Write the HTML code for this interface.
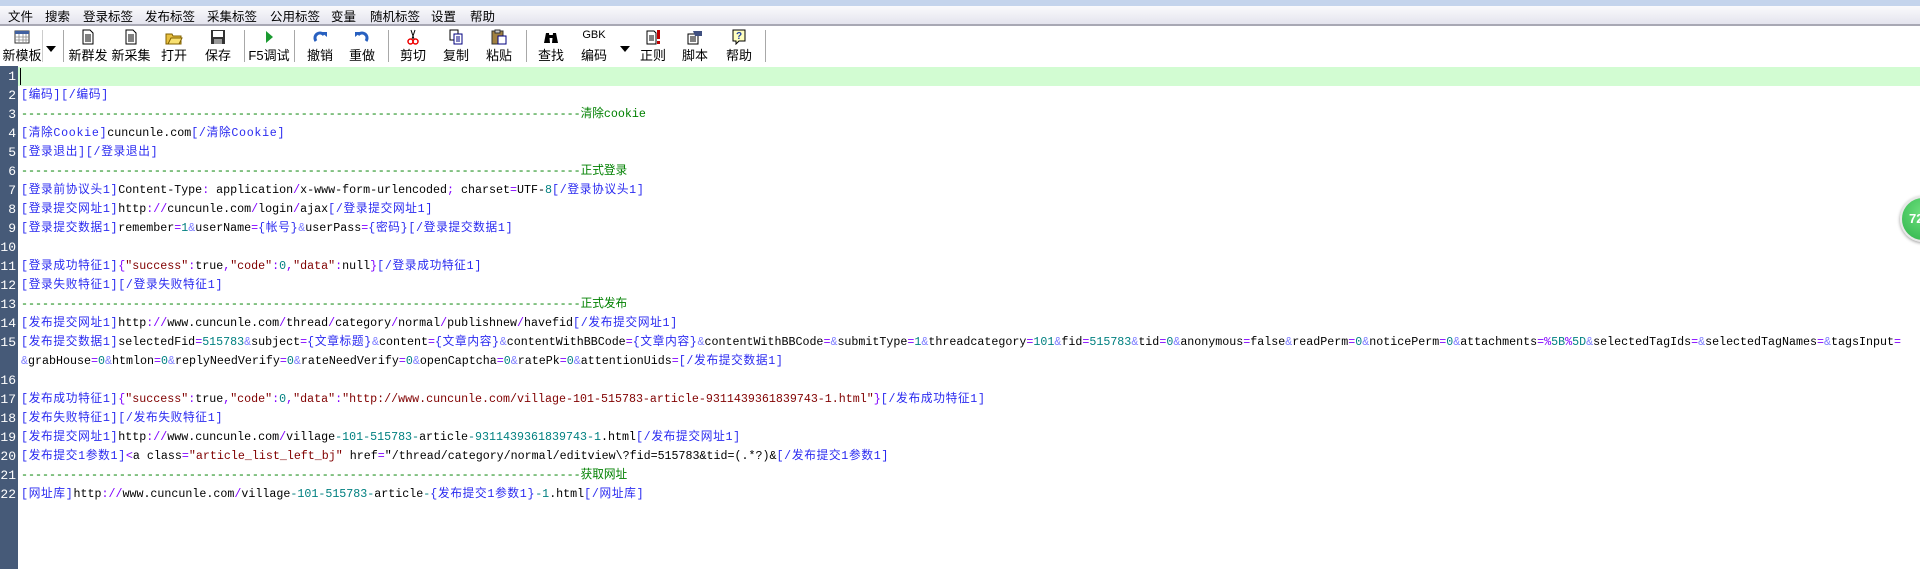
<!DOCTYPE html>
<html><head><meta charset="utf-8"><style>
*{margin:0;padding:0;box-sizing:border-box}
body{width:1920px;height:569px;overflow:hidden;background:#fff;font-family:"Liberation Sans","Noto Sans CJK SC",sans-serif;position:relative}
#title{position:absolute;left:0;top:0;width:1920px;height:6px;background:#c4d4ec}
#menu{position:absolute;left:0;top:6px;width:1920px;height:20px;background:linear-gradient(#fafafc,#e4e4ee);border-bottom:2px solid #a8a8b4;font-size:12.5px;color:#000}
#menu span{position:absolute;top:0px}
#tb{position:absolute;left:0;top:26px;width:1920px;height:40px;background:#fff}
.bt{position:absolute;top:0;width:44px;text-align:center;font-size:13px}
.bt svg{display:block;margin:3px auto 0;width:18px;height:16px}
.bt .l{display:block;margin-top:0px;white-space:nowrap}
.sep{position:absolute;top:4px;width:1px;height:32px;background:#a8a8a8}
.arr{position:absolute;top:20px;width:0;height:0;border-left:5px solid transparent;border-right:5px solid transparent;border-top:6px solid #000}
#ed{position:absolute;left:0;top:66px;width:1920px;height:503px;background:#fff}
#gut{position:absolute;left:0;top:0;width:18px;height:503px;background:#465a78}
#band{position:absolute;left:18px;top:1px;width:1902px;height:19px;background:#d2fcd2}
#cur{position:absolute;left:20px;top:2px;width:1px;height:17px;background:#000}
.ln{position:absolute;left:0;width:16px;text-align:right;color:#fff;font:13px "Liberation Mono",monospace;line-height:19px}
.tx{position:absolute;left:21px;white-space:pre;font:11.67px "Liberation Mono","Noto Sans CJK SC",monospace;line-height:19px;color:#000}
.t{color:#2a2af0;letter-spacing:0.7px}
.o{color:#8000ff}.a{color:#8080ff}.n{color:#008080}.s{color:#800000}.g{color:#008000}
#ball{position:absolute;left:1900px;top:196px;width:46px;height:46px;border-radius:50%;background:radial-gradient(circle at 50% 35%,#6ee07e,#2db34a);border:2px solid #e8e8e8;box-shadow:0 1px 3px #999;color:#fff;font:bold 13px "Liberation Sans",sans-serif;padding:13px 0 0 7px}
</style></head><body>
<div id="title"></div>
<div id="menu">
<span style="left:8px">文件</span><span style="left:45px">搜索</span><span style="left:83px">登录标签</span><span style="left:145px">发布标签</span><span style="left:207px">采集标签</span><span style="left:270px">公用标签</span><span style="left:331px">变量</span><span style="left:370px">随机标签</span><span style="left:431px">设置</span><span style="left:470px">帮助</span>
</div>
<div id="tb">
<div class="bt" style="left:0px"><svg viewBox="0 0 18 16"><rect x="2" y="2" width="14" height="12" fill="#fff" stroke="#333"/><rect x="2" y="2" width="14" height="3" fill="#4060a0"/><path d="M2 8h14M2 11h14M6 5v9M10 5v9M13 5v9" stroke="#888" stroke-width=".8"/></svg><span class="l">新模板</span></div>
<div class="sep" style="left:42px;background:#ccc"></div>
<div class="arr" style="left:46px"></div>
<div class="sep" style="left:63px"></div>
<div class="bt" style="left:66px"><svg viewBox="0 0 18 16"><path d="M4 1h7l3 3v11H4z" fill="#fff" stroke="#000"/><path d="M6 6h6M6 8h6M6 10h6M6 12h6" stroke="#000"/></svg><span class="l">新群发</span></div>
<div class="bt" style="left:109px"><svg viewBox="0 0 18 16"><path d="M4 1h7l3 3v11H4z" fill="#fff" stroke="#000"/><path d="M6 6h6M6 8h6M6 10h6M6 12h6" stroke="#000"/></svg><span class="l">新采集</span></div>
<div class="bt" style="left:152px"><svg viewBox="0 0 18 16"><path d="M1 5h6l1 2h8v8H1z" fill="#e8c040" stroke="#806000"/><path d="M3 15l3-6h11l-3 6z" fill="#f8e070" stroke="#806000"/></svg><span class="l">打开</span></div>
<div class="bt" style="left:196px"><svg viewBox="0 0 18 16"><rect x="2" y="1" width="14" height="14" fill="#333"/><rect x="4" y="2" width="10" height="6" fill="#fff"/><rect x="5" y="10" width="8" height="5" fill="#999"/></svg><span class="l">保存</span></div>
<div class="sep" style="left:244px"></div>
<div class="bt" style="left:247px"><svg viewBox="0 0 18 16"><path d="M6 2l7 6-7 6z" fill="#1a9a30"/></svg><span class="l">F5调试</span></div>
<div class="sep" style="left:294px"></div>
<div class="bt" style="left:298px"><svg viewBox="0 0 18 16"><path d="M5 12a5 5 0 1 1 8-6" fill="none" stroke="#2860c0" stroke-width="3"/><path d="M10 3h6v5z" fill="#2860c0"/></svg><span class="l">撤销</span></div>
<div class="bt" style="left:340px"><svg viewBox="0 0 18 16"><path d="M13 12a5 5 0 1 0-8-6" fill="none" stroke="#2860c0" stroke-width="3"/><path d="M8 3H2v5z" fill="#2860c0"/></svg><span class="l">重做</span></div>
<div class="sep" style="left:388px"></div>
<div class="bt" style="left:391px"><svg viewBox="0 0 18 16"><path d="M7 1l3 9M11 1l-3 9" stroke="#000"/><circle cx="6.5" cy="12.5" r="2.5" fill="none" stroke="#e00" stroke-width="1.5"/><circle cx="11.5" cy="12.5" r="2.5" fill="none" stroke="#e00" stroke-width="1.5"/></svg><span class="l">剪切</span></div>
<div class="bt" style="left:434px"><svg viewBox="0 0 18 16"><rect x="3" y="1" width="8" height="10" fill="#fff" stroke="#000"/><rect x="7" y="5" width="8" height="10" fill="#fff" stroke="#000080"/><path d="M9 8h4M9 10h4M9 12h4" stroke="#000080"/></svg><span class="l">复制</span></div>
<div class="bt" style="left:477px"><svg viewBox="0 0 18 16"><rect x="2" y="2" width="11" height="13" fill="#a08040" stroke="#333"/><rect x="5" y="1" width="5" height="3" fill="#ccc" stroke="#333"/><rect x="8" y="7" width="8" height="8" fill="#fff" stroke="#000080"/></svg><span class="l">粘贴</span></div>
<div class="sep" style="left:526px"></div>
<div class="bt" style="left:529px"><svg viewBox="0 0 18 16"><path d="M2 14l2-10h3l1 10zM10 14l1-10h3l2 10z" fill="#000"/><rect x="7" y="6" width="4" height="3" fill="#000"/></svg><span class="l">查找</span></div>
<div class="bt" style="left:572px"><span style="display:block;height:19px;padding-top:3px;font:11px 'Liberation Sans',sans-serif">GBK</span><span class="l" style="margin-top:0">编码</span></div>
<div class="arr" style="left:620px"></div>
<div class="bt" style="left:631px"><svg viewBox="0 0 18 16"><path d="M3 2h7l2 2v11H3z" fill="#fff" stroke="#000"/><path d="M5 7h5M5 9h5M5 11h5" stroke="#000"/><rect x="13" y="1" width="3" height="9" fill="#c00000"/><rect x="13" y="12" width="3" height="3" fill="#c00000"/></svg><span class="l">正则</span></div>
<div class="bt" style="left:673px"><svg viewBox="0 0 18 16"><path d="M2 5h10v10H2z" fill="#fff" stroke="#000"/><path d="M4 8h6M4 10h6M4 12h6" stroke="#000"/><path d="M7 2h9v5H9z" fill="#405080"/></svg><span class="l">脚本</span></div>
<div class="bt" style="left:717px"><svg viewBox="0 0 18 16"><path d="M3 1h12v11H9l-3 3v-3H3z" fill="#ffffc0" stroke="#000"/><text x="9" y="10" font-size="10" font-weight="bold" text-anchor="middle" fill="#2040a0" font-family="Liberation Sans">?</text></svg><span class="l">帮助</span></div>
<div class="sep" style="left:765px"></div>
</div>
<div id="ed">
<div id="gut"></div>
<div id="band"></div>
<div id="cur"></div>
<div class="ln" style="top:1px">1</div><div class="ln" style="top:20px">2</div><div class="ln" style="top:39px">3</div><div class="ln" style="top:58px">4</div><div class="ln" style="top:77px">5</div><div class="ln" style="top:96px">6</div><div class="ln" style="top:115px">7</div><div class="ln" style="top:134px">8</div><div class="ln" style="top:153px">9</div><div class="ln" style="top:172px">10</div><div class="ln" style="top:191px">11</div><div class="ln" style="top:210px">12</div><div class="ln" style="top:229px">13</div><div class="ln" style="top:248px">14</div><div class="ln" style="top:267px">15</div><div class="ln" style="top:305px">16</div><div class="ln" style="top:324px">17</div><div class="ln" style="top:343px">18</div><div class="ln" style="top:362px">19</div><div class="ln" style="top:381px">20</div><div class="ln" style="top:400px">21</div><div class="ln" style="top:419px">22</div>

<div class="tx" style="top:20px"><span class="t">[编码][/编码]</span></div>
<div class="tx" style="top:39px"><span class="g">--------------------------------------------------------------------------------清除cookie</span></div>
<div class="tx" style="top:58px"><span class="t">[清除Cookie]</span>cuncunle.com<span class="t">[/清除Cookie]</span></div>
<div class="tx" style="top:77px"><span class="t">[登录退出][/登录退出]</span></div>
<div class="tx" style="top:96px"><span class="g">--------------------------------------------------------------------------------正式登录</span></div>
<div class="tx" style="top:115px"><span class="t">[登录前协议头1]</span>Content-Type<span class="o">:</span> application<span class="o">/</span>x-www-form-urlencoded<span class="o">;</span> charset<span class="o">=</span>UTF-<span class="n">8</span><span class="t">[/登录协议头1]</span></div>
<div class="tx" style="top:134px"><span class="t">[登录提交网址1]</span>http<span class="o">://</span>cuncunle.com<span class="o">/</span>login<span class="o">/</span>ajax<span class="t">[/登录提交网址1]</span></div>
<div class="tx" style="top:153px"><span class="t">[登录提交数据1]</span>remember<span class="o">=</span><span class="n">1</span><span class="a">&amp;</span>userName<span class="o">=</span><span class="t">{帐号}</span><span class="a">&amp;</span>userPass<span class="o">=</span><span class="t">{密码}</span><span class="t">[/登录提交数据1]</span></div>
<div class="tx" style="top:191px"><span class="t">[登录成功特征1]</span><span class="o">{</span><span class="s">"success"</span><span class="o">:</span>true<span class="o">,</span><span class="s">"code"</span><span class="o">:</span><span class="n">0</span><span class="o">,</span><span class="s">"data"</span><span class="o">:</span>null<span class="o">}</span><span class="t">[/登录成功特征1]</span></div>
<div class="tx" style="top:210px"><span class="t">[登录失败特征1][/登录失败特征1]</span></div>
<div class="tx" style="top:229px"><span class="g">--------------------------------------------------------------------------------正式发布</span></div>
<div class="tx" style="top:248px"><span class="t">[发布提交网址1]</span>http<span class="o">://</span>www.cuncunle.com<span class="o">/</span>thread<span class="o">/</span>category<span class="o">/</span>normal<span class="o">/</span>publishnew<span class="o">/</span>havefid<span class="t">[/发布提交网址1]</span></div>
<div class="tx" style="top:267px"><span class="t">[发布提交数据1]</span>selectedFid<span class="o">=</span><span class="n">515783</span><span class="a">&amp;</span>subject<span class="o">=</span><span class="t">{文章标题}</span><span class="a">&amp;</span>content<span class="o">=</span><span class="t">{文章内容}</span><span class="a">&amp;</span>contentWithBBCode<span class="o">=</span><span class="t">{文章内容}</span><span class="a">&amp;</span>contentWithBBCode<span class="o">=</span><span class="a">&amp;</span>submitType<span class="o">=</span><span class="n">1</span><span class="a">&amp;</span>threadcategory<span class="o">=</span><span class="n">101</span><span class="a">&amp;</span>fid<span class="o">=</span><span class="n">515783</span><span class="a">&amp;</span>tid<span class="o">=</span><span class="n">0</span><span class="a">&amp;</span>anonymous<span class="o">=</span>false<span class="a">&amp;</span>readPerm<span class="o">=</span><span class="n">0</span><span class="a">&amp;</span>noticePerm<span class="o">=</span><span class="n">0</span><span class="a">&amp;</span>attachments<span class="o">=%</span><span class="n">5B</span><span class="o">%</span><span class="n">5D</span><span class="a">&amp;</span>selectedTagIds<span class="o">=</span><span class="a">&amp;</span>selectedTagNames<span class="o">=</span><span class="a">&amp;</span>tagsInput<span class="o">=</span></div>
<div class="tx" style="top:286px"><span class="a">&amp;</span>grabHouse<span class="o">=</span><span class="n">0</span><span class="a">&amp;</span>htmlon<span class="o">=</span><span class="n">0</span><span class="a">&amp;</span>replyNeedVerify<span class="o">=</span><span class="n">0</span><span class="a">&amp;</span>rateNeedVerify<span class="o">=</span><span class="n">0</span><span class="a">&amp;</span>openCaptcha<span class="o">=</span><span class="n">0</span><span class="a">&amp;</span>ratePk<span class="o">=</span><span class="n">0</span><span class="a">&amp;</span>attentionUids<span class="o">=</span><span class="t">[/发布提交数据1]</span></div>
<div class="tx" style="top:324px"><span class="t">[发布成功特征1]</span><span class="o">{</span><span class="s">"success"</span><span class="o">:</span>true<span class="o">,</span><span class="s">"code"</span><span class="o">:</span><span class="n">0</span><span class="o">,</span><span class="s">"data"</span><span class="o">:</span><span class="s">"http://www.cuncunle.com/village-101-515783-article-9311439361839743-1.html"</span><span class="o">}</span><span class="t">[/发布成功特征1]</span></div>
<div class="tx" style="top:343px"><span class="t">[发布失败特征1][/发布失败特征1]</span></div>
<div class="tx" style="top:362px"><span class="t">[发布提交网址1]</span>http<span class="o">://</span>www.cuncunle.com<span class="o">/</span>village<span class="n">-101-515783-</span>article<span class="n">-9311439361839743-</span><span class="n">1</span>.html<span class="t">[/发布提交网址1]</span></div>
<div class="tx" style="top:381px"><span class="t">[发布提交1参数1]</span><span class="o">&lt;</span>a class<span class="o">=</span><span class="s">"article_list_left_bj"</span> href<span class="o">=</span>"/thread/category/normal/editview\?fid=515783&amp;tid=(.*?)&amp;<span class="t">[/发布提交1参数1]</span></div>
<div class="tx" style="top:400px"><span class="g">--------------------------------------------------------------------------------获取网址</span></div>
<div class="tx" style="top:419px"><span class="t">[网址库]</span>http<span class="o">://</span>www.cuncunle.com<span class="o">/</span>village<span class="n">-101-515783-</span>article<span class="n">-</span><span class="t">{发布提交1参数1}</span><span class="n">-1</span>.html<span class="t">[/网址库]</span></div>
</div>
<div id="ball">72</div>
</body></html>
